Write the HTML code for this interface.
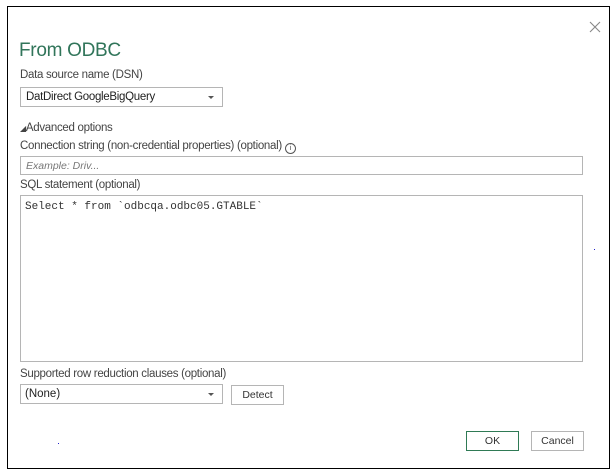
<!DOCTYPE html>
<html><head><style>
body{margin:0;width:616px;height:476px;background:#fff;font-family:"Liberation Sans",sans-serif;color:#333;position:relative;overflow:hidden}
.a{position:absolute}
.lbl{font-size:11.5px;color:#444;position:absolute;left:20px;letter-spacing:-0.3px}
.box{position:absolute;border:1px solid #b5b5b5;box-sizing:border-box;background:#fff}
.btn{position:absolute;border:1px solid #b5b5b5;box-sizing:border-box;font-size:10.5px;text-align:center;background:#fff;color:#333}
.caret{position:absolute;right:8px;top:8px;width:0;height:0;border-left:3px solid transparent;border-right:3px solid transparent;border-top:3px solid #555}
</style></head><body>
<div class="a" style="left:7px;top:6px;width:601px;height:461px;border:1px solid #000"></div>
<svg class="a" style="left:589px;top:21px" width="12" height="12"><path d="M1 1L11 11M11 1L1 11" stroke="#888" stroke-width="1.1"/></svg>
<div class="a" style="left:19px;top:40px;font-size:19px;color:#31755a;letter-spacing:-0.3px">From ODBC</div>
<div class="lbl" style="top:69px">Data source name (DSN)</div>
<div class="box" style="left:20px;top:87px;width:203px;height:20px"><span class="a" style="left:5px;top:3px;font-size:11.5px;letter-spacing:-0.3px;color:#222">DatDirect GoogleBigQuery</span><div class="caret"></div></div>
<div class="lbl" style="top:122px"><span style="font-size:8px">◢</span>Advanced options</div>
<div class="lbl" style="top:140px">Connection string (non-credential properties) (optional) <span style="display:inline-block;width:9px;height:9px;border:1px solid #555;border-radius:50%;font-size:7px;line-height:9px;text-align:center;vertical-align:-1px">i</span></div>
<div class="box" style="left:20px;top:156px;width:563px;height:19px"><span class="a" style="left:5px;top:3px;font-size:10.5px;font-style:italic;color:#777">Example: Driv...</span></div>
<div class="lbl" style="top:179px">SQL statement (optional)</div>
<div class="box" style="left:20px;top:195px;width:563px;height:167px"><span class="a" style="left:4px;top:5px;font-family:'Liberation Mono',monospace;font-size:11px;color:#333">Select * from `odbcqa.odbc05.GTABLE`</span></div>
<div class="lbl" style="top:368px">Supported row reduction clauses (optional)</div>
<div class="box" style="left:20px;top:384px;width:203px;height:20px"><span class="a" style="left:4px;top:3px;font-size:11.5px;color:#222">(None)</span><div class="caret"></div></div>
<div class="btn" style="left:231px;top:385px;width:53px;height:20px;line-height:18px">Detect</div>
<div class="btn" style="left:466px;top:431px;width:53px;height:20px;line-height:18px;border-color:#2f7a55">OK</div>
<div class="btn" style="left:531px;top:431px;width:53px;height:20px;line-height:18px">Cancel</div>
<div class="a" style="left:594px;top:249px;width:1px;height:1px;background:#22c"></div>
<div class="a" style="left:58px;top:443px;width:1px;height:1px;background:#22c"></div>
</body></html>
